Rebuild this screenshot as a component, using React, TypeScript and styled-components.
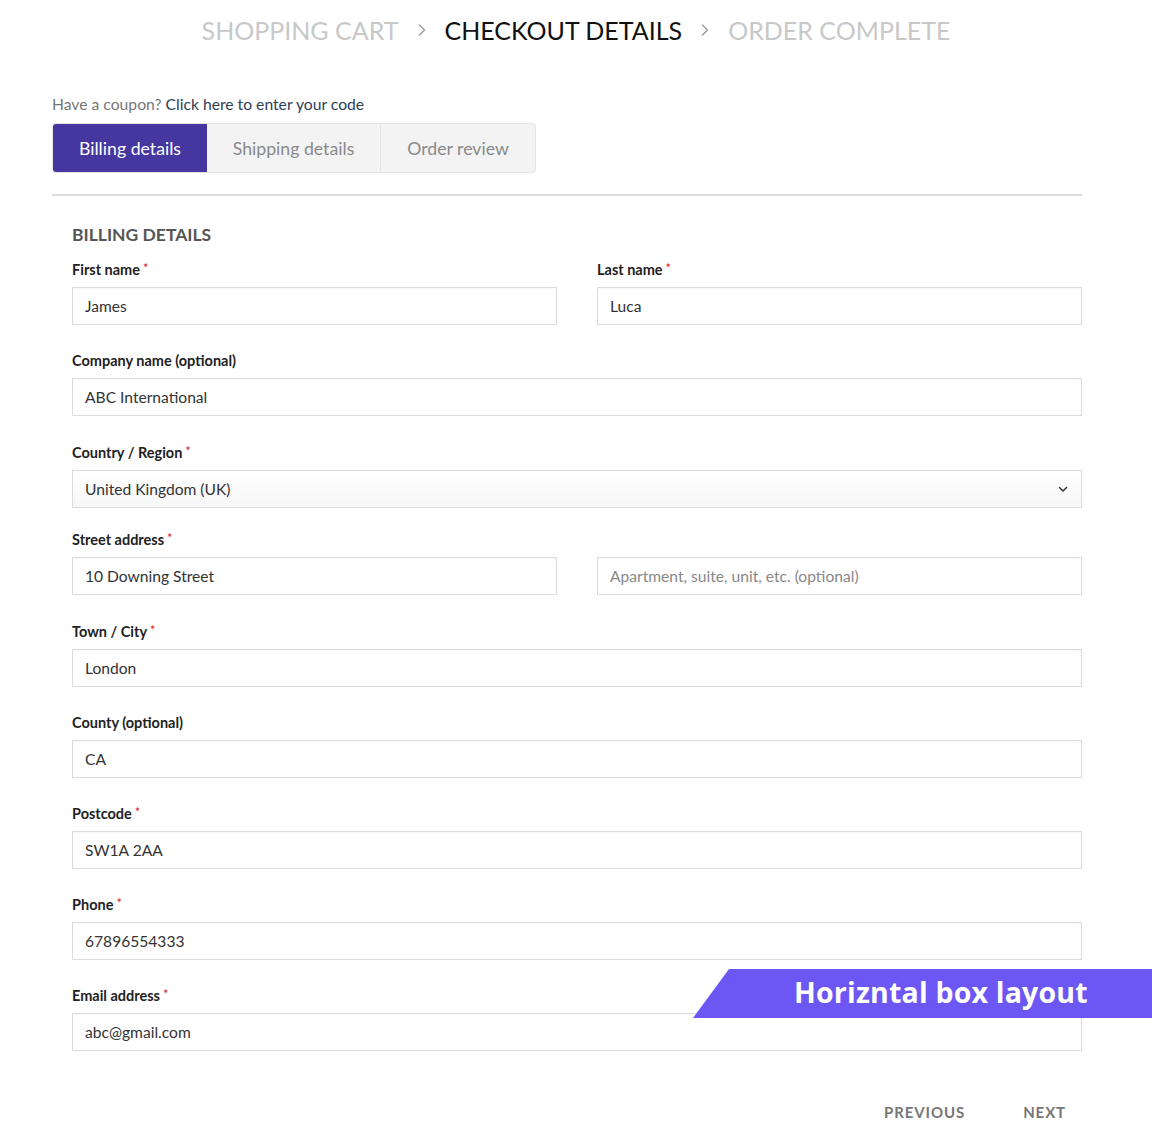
import React from "react";
import styled, { createGlobalStyle } from "styled-components";

const Global = createGlobalStyle`
  html, body { margin: 0; padding: 0; background: #fff; }
  body { font-family: Lato, "Open Sans", sans-serif; color: #333; }
  * { box-sizing: border-box; }
`;

const Page = styled.div`
  position: relative;
  width: 1152px;
  min-height: 1137px;
  overflow: hidden;
`;

const Steps = styled.nav`
  display: flex;
  justify-content: center;
  align-items: center;
  gap: 13px;
  padding-top: 12px;
  height: 48px;
  font-size: 25px;
  text-transform: uppercase;
`;

const Step = styled.span<{ $active?: boolean }>`
  color: ${(p) => (p.$active ? "#111" : "#c8c8c8")};
  font-weight: 400;
  line-height: 34px;
`;

const Sep = styled.span`
  display: flex;
  color: #999;
`;

const Main = styled.div`
  width: 1030px;
  margin-left: 52px;
  padding-top: 45px;
`;

const Coupon = styled.p`
  margin: 0;
  font-size: 15.7px;
  line-height: 22px;
  color: #777;
`;

const CouponLink = styled.a`
  color: #2e3d56;
  text-decoration: none;
`;

const Tabs = styled.div`
  display: inline-flex;
  margin-top: 8px;
  border: 1px solid #e3e3e3;
  border-radius: 4px;
  background: #f3f3f3;
  overflow: hidden;
`;

const Tab = styled.div<{ $active?: boolean; $w: number }>`
  width: ${(p) => p.$w}px;
  height: 48px;
  display: flex;
  align-items: center;
  justify-content: center;
  font-size: 17.7px;
  color: ${(p) => (p.$active ? "#fff" : "#8a8a8a")};
  background: ${(p) => (p.$active ? "#4536a0" : "transparent")};
  border-right: ${(p) => (p.$active ? "none" : "1px solid #e3e3e3")};
  &:last-child { border-right: none; }
`;

const Rule = styled.hr`
  margin: 21px 0 0;
  border: none;
  border-top: 2px solid #dedede;
`;

const Form = styled.form`
  padding: 27px 0 0 20px;
`;

const Heading = styled.h3`
  margin: 0 0 14px;
  font-size: 17.5px;
  line-height: 24px;
  font-weight: 700;
  color: #555;
  text-transform: uppercase;
`;

const Row = styled.div<{ $mb?: number }>`
  display: grid;
  grid-template-columns: 1fr 1fr;
  column-gap: 40px;
  margin-bottom: ${(p) => p.$mb ?? 27}px;
`;

const Field = styled.div<{ $mb?: number }>`
  display: flex;
  flex-direction: column;
`;

const FieldBlock = styled(Field)`
  margin-bottom: ${(p) => p.$mb ?? 27}px;
`;

const Label = styled.label`
  font-size: 14.5px;
  line-height: 18px;
  height: 18px;
  font-weight: 700;
  color: #222;
  margin-bottom: 8px;
  white-space: nowrap;
`;

const Req = styled.span`
  color: #d2232a;
  font-size: 13px;
  line-height: 0;
  margin-left: 3px;
  vertical-align: 2px;
  font-weight: 400;
`;

const Input = styled.input`
  height: 38px;
  width: 100%;
  border: 1px solid #dcdcdc;
  box-shadow: inset 0 1px 2px rgba(0, 0, 0, 0.04);
  padding: 0 12px;
  font-family: Lato, sans-serif;
  font-size: 15.6px;
  color: #333;
  background: #fff;
  outline: none;
  &::placeholder { color: #888; }
`;

const Select = styled.div`
  height: 38px;
  width: 100%;
  border: 1px solid #dcdcdc;
  padding: 0 12px;
  display: flex;
  align-items: center;
  justify-content: space-between;
  font-size: 15.6px;
  color: #333;
  background: linear-gradient(#fff, #f7f7f7);
`;

const Actions = styled.div`
  display: flex;
  justify-content: flex-end;
  gap: 26px;
  padding: 46px 0 0;
`;

const NavButton = styled.button`
  border: none;
  background: none;
  padding: 0 16px;
  height: 30px;
  font-family: Lato, sans-serif;
  font-size: 15px;
  font-weight: 700;
  letter-spacing: 0.9px;
  color: #777;
  text-transform: uppercase;
`;

const Banner = styled.div`
  position: absolute;
  left: 693px;
  top: 969px;
  width: 459px;
  height: 49px;
  background: #6c57f5;
  clip-path: polygon(36px 0, 100% 0, 100% 100%, 0 100%);
  display: flex;
  align-items: center;
  padding-left: 101px;
  padding-bottom: 3px;
  color: #fff;
  font-family: "Open Sans", sans-serif;
  font-weight: 700;
  font-size: 28.5px;
  letter-spacing: 0.2px;
`;

const Chevron = ({ size = 20 }: { size?: number }) => (
  <svg width={size} height={size} viewBox="0 0 24 24" fill="none" stroke="currentColor" strokeWidth="1.6" strokeLinecap="round" strokeLinejoin="round">
    <path d="M9 6l6 6-6 6" />
  </svg>
);

const Down = () => (
  <svg width="12" height="12" viewBox="0 0 12 12" fill="none" stroke="#333" strokeWidth="1.5" strokeLinecap="round" strokeLinejoin="round">
    <path d="M2.5 4.5L6 8l3.5-3.5" />
  </svg>
);

type F = { label: string; req?: boolean; value?: string };

const Single = ({ label, req, value, mb }: F & { mb?: number }) => (
  <FieldBlock $mb={mb}>
    <Label>
      {label}
      {req && <Req>*</Req>}
    </Label>
    <Input defaultValue={value} readOnly />
  </FieldBlock>
);

export default function App() {
  return (
    <Page>
      <Global />
      <Steps>
        <Step>Shopping Cart</Step>
        <Sep><Chevron /></Sep>
        <Step $active>Checkout Details</Step>
        <Sep><Chevron /></Sep>
        <Step>Order Complete</Step>
      </Steps>
      <Main>
        <Coupon>
          Have a coupon? <CouponLink href="#">Click here to enter your code</CouponLink>
        </Coupon>
        <Tabs>
          <Tab $active $w={154}>Billing details</Tab>
          <Tab $w={174}>Shipping details</Tab>
          <Tab $w={154}>Order review</Tab>
        </Tabs>
        <Rule />
        <Form onSubmit={(e) => e.preventDefault()}>
          <Heading>Billing details</Heading>
          <Row>
            <Field>
              <Label>First name<Req>*</Req></Label>
              <Input defaultValue="James" readOnly />
            </Field>
            <Field>
              <Label>Last name<Req>*</Req></Label>
              <Input defaultValue="Luca" readOnly />
            </Field>
          </Row>
          <Single label="Company name (optional)" value="ABC International" mb={28} />
          <FieldBlock $mb={23}>
            <Label>Country / Region<Req>*</Req></Label>
            <Select>
              <span>United Kingdom (UK)</span>
              <Down />
            </Select>
          </FieldBlock>
          <Row $mb={28}>
            <Field>
              <Label>Street address<Req>*</Req></Label>
              <Input defaultValue="10 Downing Street" readOnly />
            </Field>
            <Field>
              <Label>&nbsp;</Label>
              <Input placeholder="Apartment, suite, unit, etc. (optional)" readOnly />
            </Field>
          </Row>
          <Single label="Town / City" req value="London" />
          <Single label="County (optional)" value="CA" />
          <Single label="Postcode" req value="SW1A 2AA" />
          <Single label="Phone" req value="67896554333" />
          <Single label="Email address" req value="abc@gmail.com" mb={0} />
          <Actions>
            <NavButton type="button">Previous</NavButton>
            <NavButton type="button">Next</NavButton>
          </Actions>
        </Form>
      </Main>
      <Banner>Horizntal box layout</Banner>
    </Page>
  );
}
